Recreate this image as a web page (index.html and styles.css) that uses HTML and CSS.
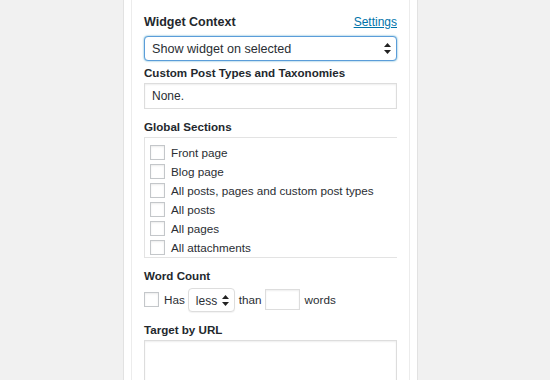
FILE: index.html
```html
<!DOCTYPE html>
<html lang="en">
<head>
    <meta charset="UTF-8">
    <title>Widget Context</title>
    <link rel="stylesheet" href="styles.css">
</head>
<body>
    <div class="page">
        <div class="widget">
            <div class="widget-inside">
                <div class="head">
                    <span class="label label-main">Widget Context</span>
                    <a class="settings" href="#">Settings</a>
                </div>
                <div class="select select-focus">
                    <span>Show widget on selected</span>
                    <svg class="arrows" width="7" height="11" viewBox="0 0 7 11"><path d="M3.5 0 L7 4 L0 4 Z M3.5 11 L7 7 L0 7 Z" fill="#222"/></svg>
                </div>

                <div class="label label-gap">Custom Post Types and Taxonomies</div>
                <div class="input input-wide">None.</div>

                <div class="label section-label">Global Sections</div>
                <div class="check-list">
                    <label class="check-row"><span class="check"></span>Front page</label>
                    <label class="check-row"><span class="check"></span>Blog page</label>
                    <label class="check-row"><span class="check"></span>All posts, pages and custom post types</label>
                    <label class="check-row"><span class="check"></span>All posts</label>
                    <label class="check-row"><span class="check"></span>All pages</label>
                    <label class="check-row"><span class="check"></span>All attachments</label>
                </div>

                <div class="label section-label">Word Count</div>
                <div class="count-row">
                    <span class="check"></span>
                    <span class="has">Has</span>
                    <div class="select select-small">
                        <span>less</span>
                        <svg class="arrows" width="7" height="11" viewBox="0 0 7 11"><path d="M3.5 0 L7 4 L0 4 Z M3.5 11 L7 7 L0 7 Z" fill="#222"/></svg>
                    </div>
                    <span class="than">than</span>
                    <div class="input input-count"></div>
                    <span class="words">words</span>
                </div>

                <div class="label section-label">Target by URL</div>
                <div class="textarea"></div>
            </div>
        </div>
    </div>
</body>
</html>
```

FILE: styles.css
```css
* { box-sizing: border-box; }
body { margin: 0; background: #f1f1f1; font-family: 'Liberation Sans', Arial, sans-serif; font-size: 11.7px; color: #2a2e33; }
.page { display: flex; padding-left: 123px; height: 380px; overflow: hidden; }
.widget { width: 295px; background: #fff; border-left: 1px solid #e2e2e2; border-right: 1px solid #e2e2e2; }
.widget-inside { margin: 0 7px; height: 100%; border-left: 1px solid #ececec; border-right: 1px solid #ececec; padding: 13px 12px 0; }

.head { display: flex; justify-content: space-between; align-items: center; height: 18px; }
.label { font-weight: bold; color: #23282d; font-size: 11.6px; line-height: 18px; height: 18px; }
.label-main { font-size: 12.5px; }
.settings { color: #0073aa; text-decoration: underline; font-size: 12px; }
.label-gap { margin-top: 3px; }
.section-label { margin-top: 9px; }

.select { display: flex; align-items: center; justify-content: space-between; background: #fff; border: 1px solid #ddd; border-radius: 4px; color: #2a2e33; }
.select-focus { margin-top: 5px; height: 25px; padding: 0 5px 0 7px; border-color: #5b9dd9; box-shadow: 0 0 2px rgba(30, 140, 190, 0.8); font-size: 12.6px; }
.select-small { width: 47px; height: 24px; padding: 2px 5px 0 7px; font-size: 12px; box-shadow: 0 1px 1px rgba(0, 0, 0, 0.05); }
.arrows { display: block; }

.input { background: #fff; border: 1px solid #ddd; box-shadow: inset 0 1px 2px rgba(0, 0, 0, 0.07); }
.input-wide { margin-top: 1px; height: 26px; line-height: 24px; padding: 0 7px; font-size: 12px; }
.input-count { width: 35px; height: 21px; }

.check-list { margin-top: 1px; height: 121px; border-top: 1px solid #e3e3e3; border-left: 1px solid #e3e3e3; border-bottom: 1px solid #e3e3e3; padding: 5px 0 0 5px; overflow: hidden; }
.check-row { display: flex; align-items: center; height: 19px; }
.check { display: inline-block; width: 15px; height: 15px; border: 1px solid #c4c7ca; background: #fff; box-shadow: inset 0 1px 2px rgba(0, 0, 0, 0.08); margin-right: 6px; flex-shrink: 0; }

.count-row { display: flex; align-items: center; margin-top: 2px; height: 25px; }
.count-row .check { margin-right: 5px; }
.has { margin-right: 3px; }
.than { margin: 0 3px 0 4px; }
.words { margin-left: 5px; }

.textarea { margin-top: 1px; height: 60px; border: 1px solid #ddd; background: #fff; box-shadow: inset 0 1px 2px rgba(0, 0, 0, 0.07); }
```
